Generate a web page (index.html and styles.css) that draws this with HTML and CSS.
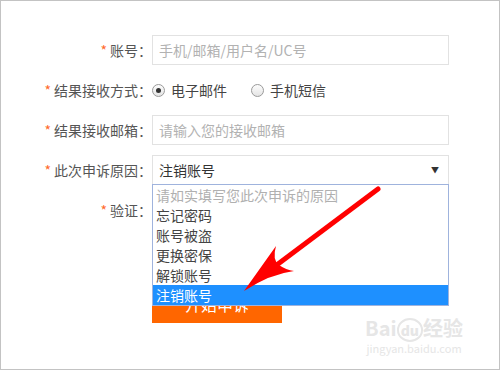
FILE: index.html
```html
<!doctype html>
<html lang="zh-CN">
    <head>
        <meta charset="utf-8">
        <title>申诉</title>
        <link rel="stylesheet" href="styles.css">
    </head>
    <body>
        <div class="frame">
            <form class="appeal">
                <div class="row">
                    <label class="label"><em>*</em>账号：</label>
                    <div class="field"><input type="text" placeholder="手机/邮箱/用户名/UC号" /></div>
                </div>
                <div class="row">
                    <label class="label"><em>*</em>结果接收方式：</label>
                    <div class="field radios">
                        <span class="radio"><i class="dot on"></i>电子邮件</span>
                        <span class="radio"><i class="dot"></i>手机短信</span>
                    </div>
                </div>
                <div class="row">
                    <label class="label"><em>*</em>结果接收邮箱：</label>
                    <div class="field"><input type="text" placeholder="请输入您的接收邮箱" /></div>
                </div>
                <div class="row">
                    <label class="label"><em>*</em>此次申诉原因：</label>
                    <div class="field select-wrap">
                        <div class="select">注销账号<span class="caret">▼</span></div>
                        <ul class="options">
                            <li class="hint">请如实填写您此次申诉的原因</li>
                            <li>忘记密码</li>
                            <li>账号被盗</li>
                            <li>更换密保</li>
                            <li>解锁账号</li>
                            <li class="active">注销账号</li>
                        </ul>
                    </div>
                </div>
                <div class="row">
                    <label class="label"><em>*</em>验证：</label>
                    <div class="field"></div>
                </div>
                <div class="row submit">
                    <span class="label"></span>
                    <button type="button">开始申诉</button>
                </div>
            </form>

            <svg class="arrow" width="500" height="370" viewBox="0 0 500 370">
                <line x1="378" y1="189" x2="266" y2="273" stroke="#f00" stroke-width="5" stroke-linecap="round" />
                <path d="M244 291 L276 246 Q272 260 279 265 Q286 270 294 271 Q270 274 244 291 Z" fill="#f00" />
            </svg>

            <div class="mark">
                <span class="logo">Bai<b>du</b>经验</span>
                <span class="url">jingyan.baidu.com</span>
            </div>
        </div>
    </body>
</html>
```

FILE: styles.css
```css
* {
    margin: 0;
    padding: 0;
    box-sizing: border-box;
    font-family: "Noto Sans CJK SC", "Liberation Sans", sans-serif;
}

body {
    background: #fff;
}

.frame {
    position: relative;
    width: 500px;
    height: 370px;
    border: 1px solid #c3c3c3;
    padding-top: 34px;
    overflow: hidden;
}

.row {
    display: flex;
    align-items: center;
    height: 30px;
    margin-bottom: 10px;
}

.label {
    width: 151px;
    text-align: right;
    font-size: 14px;
    color: #555;
    line-height: 30px;
}

.label em {
    font-style: normal;
    color: #ff6a2b;
    margin-right: 3px;
}

.field {
    width: 297px;
    height: 30px;
}

input {
    width: 100%;
    height: 30px;
    border: 1px solid #e2e2e2;
    padding: 0 6px;
    font-size: 14px;
    color: #333;
    outline: none;
}

input::placeholder {
    color: #b2b2b2;
}

.radios {
    display: flex;
    align-items: center;
    gap: 24px;
    font-size: 14px;
    color: #444;
}

.radio {
    display: flex;
    align-items: center;
    gap: 6px;
}

.dot {
    width: 13px;
    height: 13px;
    border-radius: 50%;
    border: 1px solid #9a9a9a;
    background: linear-gradient(#fdfdfd, #e4e4e4);
    position: relative;
}

.dot.on::after {
    content: "";
    position: absolute;
    left: 3px;
    top: 3px;
    width: 5px;
    height: 5px;
    border-radius: 50%;
    background: #333;
}

.select-wrap {
    position: relative;
}

.select {
    height: 30px;
    border: 1px solid #e2e2e2;
    border-bottom-color: #9fb3dd;
    padding: 0 6px;
    font-size: 14px;
    line-height: 28px;
    color: #333;
    display: flex;
    justify-content: space-between;
}

.caret {
    font-size: 8px;
    color: #333;
    margin-right: 3px;
}

.options {
    position: absolute;
    left: 0;
    top: 29px;
    width: 297px;
    list-style: none;
    background: #fff;
    border: 1px solid #9fb3dd;
    z-index: 2;
}

.options li {
    height: 20px;
    line-height: 20px;
    padding-left: 3px;
    font-size: 14px;
    color: #444;
}

.options li.hint {
    color: #b0b0b0;
}

.options li.active {
    background: #1e90ff;
    color: #fff;
}

.submit {
    margin-top: 60px;
    height: 38px;
}

button {
    width: 130px;
    height: 38px;
    border: 0;
    background: #ff6600;
    color: #fff;
    font-size: 16px;
}

.arrow {
    position: absolute;
    left: -1px;
    top: -1px;
    z-index: 3;
}

.mark {
    position: absolute;
    right: 36px;
    bottom: 14px;
    display: flex;
    flex-direction: column;
    align-items: center;
    color: #e6e6e6;
}

.logo {
    font-size: 20px;
    font-weight: 700;
    line-height: 22px;
}

.logo b {
    font-size: 14px;
    border-radius: 50%;
    padding: 0 2px;
    border: 2px solid #e6e6e6;
}

.url {
    font-size: 11px;
    line-height: 14px;
}
```
